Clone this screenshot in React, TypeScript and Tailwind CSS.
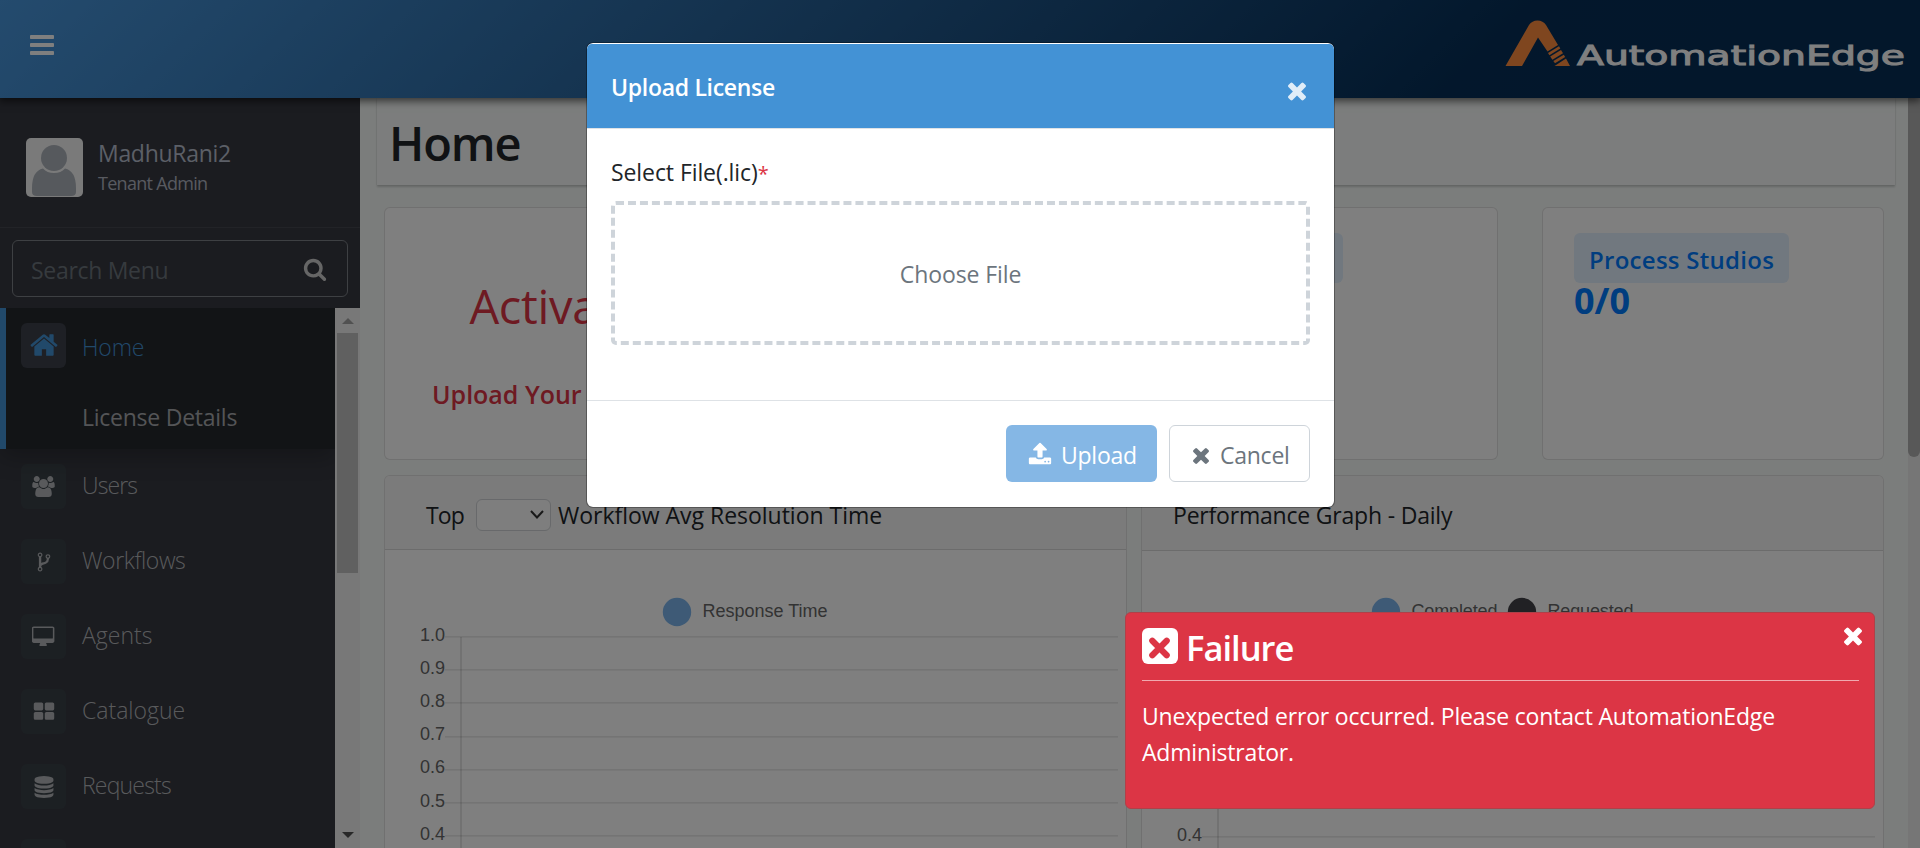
import type { ReactNode } from "react";

const ICONS = {
  bars: "M1664 1344v128q0 26-19 45t-45 19h-1408q-26 0-45-19t-19-45v-128q0-26 19-45t45-19h1408q26 0 45 19t19 45zm0-512v128q0 26-19 45t-45 19h-1408q-26 0-45-19t-19-45v-128q0-26 19-45t45-19h1408q26 0 45 19t19 45zm0-512v128q0 26-19 45t-45 19h-1408q-26 0-45-19t-19-45v-128q0-26 19-45t45-19h1408q26 0 45 19t19 45z",
  times: "M1490 1322q0 40-28 68l-136 136q-28 28-68 28t-68-28l-294-294-294 294q-28 28-68 28t-68-28l-136-136q-28-28-28-68t28-68l294-294-294-294q-28-28-28-68t28-68l136-136q28-28 68-28t68 28l294 294 294-294q28-28 68-28t68 28l136 136q28 28 28 68t-28 68l-294 294 294 294q28 28 28 68z",
  home: "M1472 992v480q0 26-19 45t-45 19h-384v-384h-256v384h-384q-26 0-45-19t-19-45v-480q0-1 .5-3t.5-3l575-474 575 474q1 2 1 6zm223-69l-62 74q-8 9-21 11h-3q-13 0-21-7l-692-577-692 577q-12 8-24 7-13-2-21-11l-62-74q-8-10-7-23.5t11-21.5l719-599q32-26 76-26t76 26l244 204v-195q0-14 9-23t23-9h192q14 0 23 9t9 23v408l219 182q10 8 11 21.5t-7 23.5z",
  search: "M1216 832q0-185-131.5-316.5t-316.5-131.5-316.5 131.5-131.5 316.5 131.5 316.5 316.5 131.5 316.5-131.5 131.5-316.5zm512 832q0 52-38 90t-90 38q-54 0-90-38l-343-342q-179 124-399 124-143 0-273.5-55.5t-225-150-150-225-55.5-273.5 55.5-273.5 150-225 225-150 273.5-55.5 273.5 55.5 225 150 150 225 55.5 273.5q0 220-124 399l343 343q37 37 37 90z",
  fork: "M672 1472q0-40-28-68t-68-28-68 28-28 68 28 68 68 28 68-28 28-68zm0-1152q0-40-28-68t-68-28-68 28-28 68 28 68 68 28 68-28 28-68zm640 128q0-40-28-68t-68-28-68 28-28 68 28 68 68 28 68-28 28-68zm96 0q0 52-26 96.5t-70 69.5q-2 287-226 414-67 38-203 81-128 40-169.5 71t-41.5 100v26q44 25 70 69.5t26 96.5q0 80-56 136t-136 56-136-56-56-136q0-52 26-96.5t70-69.5v-820q-44-25-70-69.5t-26-96.5q0-80 56-136t136-56 136 56 56 136q0 52-26 96.5t-70 69.5v497q54-26 154-57 55-17 87.5-29.5t70.5-31 59-39.5 40.5-51 28-69.5 8.5-91.5q-44-25-70-69.5t-26-96.5q0-80 56-136t136-56 136 56 56 136z",
  upload: "M1344 1472q0-26-19-45t-45-19-45 19-19 45 19 45 45 19 45-19 19-45zm256 0q0-26-19-45t-45-19-45 19-19 45 19 45 45 19 45-19 19-45zm128-224v320q0 40-28 68t-68 28h-1472q-40 0-68-28t-28-68v-320q0-40 28-68t68-28h427q21 56 70.5 92t110.5 36h256q61 0 110.5-36t70.5-92h427q40 0 68 28t28 68zm-325-648q-17 40-59 40h-256v448q0 26-19 45t-45 19h-256q-26 0-45-19t-19-45v-448h-256q-42 0-59-40-17-39 14-69l448-448q18-19 45-19t45 19l448 448q31 30 14 69z",
  grid: "M832 1024v384q0 52-38 90t-90 38h-512q-52 0-90-38t-38-90v-384q0-52 38-90t90-38h512q52 0 90 38t38 90zm0-768v384q0 52-38 90t-90 38h-512q-52 0-90-38t-38-90v-384q0-52 38-90t90-38h512q52 0 90 38t38 90zm896 768v384q0 52-38 90t-90 38h-512q-52 0-90-38t-38-90v-384q0-52 38-90t90-38h512q52 0 90 38t38 90zm0-768v384q0 52-38 90t-90 38h-512q-52 0-90-38t-38-90v-384q0-52 38-90t90-38h512q52 0 90 38t38 90z",
  database: "M896 768q237 0 443-43t325-127v170q0 69-103 128t-280 93.5-385 34.5-385-34.5-280-93.5-103-128v-170q119 84 325 127t443 43zm0 768q237 0 443-43t325-127v170q0 69-103 128t-280 93.5-385 34.5-385-34.5-280-93.5-103-128v-170q119 84 325 127t443 43zm0-384q237 0 443-43t325-127v170q0 69-103 128t-280 93.5-385 34.5-385-34.5-280-93.5-103-128v-170q119 84 325 127t443 43zm0-1152q208 0 385 34.5t280 93.5 103 128v128q0 69-103 128t-280 93.5-385 34.5-385-34.5-280-93.5-103-128v-128q0-69 103-128t280-93.5 385-34.5z",
  users: "M593 896q-162 5-265 128h-134q-82 0-138-40.5t-56-118.5q0-353 124-353 6 0 43.5 21t97.5 42.5 119 21.5q67 0 133-23-5 37-5 66 0 139 81 256zm1071 637q0 120-73 189.5t-194 69.5h-874q-121 0-194-69.5t-73-189.5q0-53 3.5-103.5t14-109 26.5-108.5 43-97.5 62-81 85.5-53.5 111.5-20q10 0 43 21.5t73 48 107 48 135 21.5 135-21.5 107-48 73-48 43-21.5q61 0 111.5 20t85.5 53.5 62 81 43 97.5 26.5 108.5 14 109 3.5 103.5zm-1024-1277q0 106-75 181t-181 75-181-75-75-181 75-181 181-75 181 75 75 181zm704 384q0 159-112.5 271.5t-271.5 112.5-271.5-112.5-112.5-271.5 112.5-271.5 271.5-112.5 271.5 112.5 112.5 271.5zm576 225q0 78-56 118.5t-138 40.5h-134q-103-123-265-128 81-117 81-256 0-29-5-66 66 23 133 23 59 0 119-21.5t97.5-42.5 43.5-21q124 0 124 353zm-128-609q0 106-75 181t-181 75-181-75-75-181 75-181 181-75 181 75 75 181z",
  desktop: "M1728 992v-832q0-13-9.5-22.5t-22.5-9.5h-1600q-13 0-22.5 9.5t-9.5 22.5v832q0 13 9.5 22.5t22.5 9.5h1600q13 0 22.5-9.5t9.5-22.5zm128-832v1088q0 66-47 113t-113 47h-544q0 37 16 77.5t32 71 16 43.5q0 26-19 45t-45 19h-512q-26 0-45-19t-19-45q0-14 16-44t32-70 16-78h-544q-66 0-113-47t-47-113v-1088q0-66 47-113t113-47h1600q66 0 113 47t47 113z",
};

function Icon({ name, className, box = "0 0 1792 1792" }: { name: keyof typeof ICONS; className: string; box?: string }) {
  return (
    <svg viewBox={box} className={`shrink-0 fill-current ${className}`}>
      <path d={ICONS[name]} />
    </svg>
  );
}

function Logo() {
  return (
    <svg viewBox="0 0 410 64" className="h-16 w-[410px]">
      <g fill="#fe8c3e">
        <path d="M0.500 52 L24 11 Q27 6.500 32.500 6.500 Q38 6.500 41 11 L53 31 L42.500 37.500 L33 23.500 L17 52 Z" />
        <path d="M43 39 L54 32.300 L55.300 34.500 L44.400 41.200 Z" />
        <path d="M45.200 42.400 L56 35.900 L58 39.200 L47.400 45.800 Z" />
        <path d="M48.300 47.100 L58.800 40.700 L60.200 43 L50 49.300 Z" />
        <path d="M49.500 52 L61 44.500 L65 52 Z" />
      </g>
      <text x="72" y="51" textLength="328" lengthAdjust="spacingAndGlyphs" fill="#ffffff" stroke="#ffffff" strokeWidth="1" fontFamily="DejaVu Sans, sans-serif" fontSize="27">
        AutomationEdge
      </text>
    </svg>
  );
}

function MenuItem({ icon, label, box, size, tracking = "" }: { icon: keyof typeof ICONS; label: string; box?: string; size: string; tracking?: string }) {
  return (
    <div className="flex h-[75px] shrink-0 items-center pl-[21px] text-[#b2b4b8]">
      <div className="flex size-[45px] items-center justify-center rounded-md bg-[#394147]">
        <Icon name={icon} className={size} box={box} />
      </div>
      <span className={`pb-[3px] pl-4 text-[23px] leading-9 font-light ${tracking}`}>{label}</span>
    </div>
  );
}

function Sidebar() {
  return (
    <aside className="flex w-[360px] shrink-0 flex-col bg-[#363840]">
      <div className="flex h-[130px] shrink-0 items-start border-b border-[#44474e] pt-10 pl-[26px]">
        <svg viewBox="0 0 57 59" className="h-[59px] w-[57px]">
          <rect width="57" height="59" rx="5" fill="#f4f5f5" />
          <circle cx="28" cy="20" r="13" fill="#adb2ba" />
          <path d="M6 58V50Q6 33 17 30.500Q21 35 28 35Q35 35 39 30.500Q50 33 50 50V54Q50 58 45 58H11Q6 58 6 54Z" fill="#adb2ba" />
        </svg>
        <div className="pl-[15px] text-[#b8bfce]">
          <div className="text-[23px] leading-[30px] tracking-[-0.3px]">MadhuRani2</div>
          <div className="pt-[3px] text-[18px] leading-6 tracking-[-0.700px] text-[#b0b5c0]">Tenant Admin</div>
        </div>
      </div>
      <div className="shrink-0 px-3 pt-3 pb-[11px]">
        <div className="flex h-[57px] items-center justify-between rounded-md border border-[#7c8086] pr-5 pl-[18px]">
          <span className="pt-1 text-[23px] tracking-[-0.300px] text-[#6c757d]">Search Menu</span>
          <Icon name="search" className="size-6 text-[#cccccc]" box="0 0 1792 1792" />
        </div>
      </div>
      <div className="flex min-h-0 flex-1">
        <nav className="flex min-w-0 flex-1 flex-col overflow-hidden">
          <div className="z-10 flex h-[141px] shrink-0 flex-col border-l-[6px] border-[#4392d5] bg-[#24282c] pt-[15px] pl-[15px] shadow-[0_8px_22px_rgba(0,0,0,0.24)]">
            <div className="flex h-[45px] items-center">
              <div className="flex size-[45px] items-center justify-center rounded-md bg-[#3c404a] text-[#4392d5]">
                <Icon name="home" className="-mt-0.5 size-[30px]" />
              </div>
              <span className="pt-0.5 pl-4 text-[23px] leading-9 font-light tracking-[-0.200px] text-[#4392d5]">Home</span>
            </div>
            <div className="pt-[31px] pl-[61px] text-[23px] leading-9 tracking-[-0.250px] text-[#a8aaae]">License Details</div>
          </div>
          <MenuItem icon="users" label="Users" size="h-[21px] w-[23px]" box="0 0 1920 1792" tracking="tracking-[-0.900px]" />
          <MenuItem icon="fork" label="Workflows" size="size-[22px]" tracking="tracking-[-0.400px]" />
          <MenuItem icon="desktop" label="Agents" size="h-[21px] w-[23px]" box="-32 -32 1920 1792" />
          <MenuItem icon="grid" label="Catalogue" size="size-[22px]" box="0 0 1792 1792" />
          <MenuItem icon="database" label="Requests" size="size-[22px]" tracking="tracking-[-0.800px]" />
          <MenuItem icon="users" label="" size="h-[21px] w-[23px]" box="0 0 1920 1792" />
        </nav>
        <div className="z-20 flex w-[25px] shrink-0 flex-col items-center justify-between bg-[#f1f1f1] pt-2.5 pb-2.5">
          <div className="flex flex-col items-center gap-[9px]">
            <svg viewBox="0 0 12 6" className="h-1.5 w-3"><path d="M6 0L12 6H0Z" fill="#a3a3a3" /></svg>
            <div className="h-60 w-[21px] bg-[#c1c1c1]" />
          </div>
          <svg viewBox="0 0 12 6" className="h-1.5 w-3"><path d="M0 0H12L6 6Z" fill="#505050" /></svg>
        </div>
      </div>
    </aside>
  );
}

function Card({ children, className = "" }: { children?: ReactNode; className?: string }) {
  return <div className={`h-[253px] w-[342px] rounded-md border border-black/12 bg-white ${className}`}>{children}</div>;
}

function StatCard({ title, value }: { title: string; value: string }) {
  return (
    <Card className="flex flex-col items-start pt-[25px] pl-[31px] text-[#007bff]">
      <div className="h-[50px] min-w-[148px] rounded-md bg-[#e2f0ff] px-[15px] pt-[9px] text-[24px] leading-9 font-semibold tracking-[0.280px]">{title}</div>
      <div className="-mt-px text-[36px] leading-[38px] font-bold">{value}</div>
    </Card>
  );
}

const TICKS = ["1.0", "0.9", "0.8", "0.7", "0.6", "0.5", "0.4"];

function ChartSvg({ legend, dy = 0 }: { legend: { x: number; label: string; color: string; w: number }[]; dy?: number }) {
  return (
    <svg viewBox="0 0 741 300" className="h-[300px] w-[741px] font-['Liberation_Sans']" fontSize="18">
      {legend.map((l) => (
        <g key={l.label}>
          <circle cx={l.x} cy={62 - dy} r="14.2" fill={l.color} />
          <text x={l.x + 25.5} y={67 - dy} fill="#666666" textLength={l.w}>{l.label}</text>
        </g>
      ))}
      {TICKS.map((t, i) => (
        <g key={t}>
          <text x="35" y={90.5 + i * 33.2} fill="#666666">{t}</text>
          <path d={`M60 ${86 + Math.round(i * 33.2)}.8H733`} stroke="#000000" strokeOpacity="0.12" strokeWidth="1.3" />
        </g>
      ))}
      <path d="M76 87V300" stroke="#000000" strokeOpacity="0.16" strokeWidth="1.3" />
    </svg>
  );
}

function Main() {
  return (
    <main className="flex min-w-0 flex-1 flex-col overflow-hidden bg-[#f7fbf9]">
      <div className="mr-[13px] ml-[17px] flex h-[87px] shrink-0 items-center bg-[#f8fbfa] pl-3 shadow-[0_2px_2px_rgba(0,0,0,0.18),0_0_1px_rgba(0,0,0,0.15)]">
        <h1 className="pt-1 text-[47px] font-semibold tracking-[-1.100px] text-[#212529]">Home</h1>
      </div>
      <div className="mt-[22px] mr-6 ml-6 flex shrink-0 justify-between">
        <Card className="flex flex-col items-center text-[#dc3545]">
          <div className="pt-[65px] text-[47px] leading-[66px] tracking-[-0.300px]">Activate</div>
          <div className="pt-[37px] text-[25px] leading-9 font-semibold">Upload Your License</div>
        </Card>
        <Card />
        <StatCard title="Workflows" value="0/0" />
        <StatCard title="Process Studios" value="0/0" />
      </div>
      <div className="mt-[15px] mr-6 ml-6 flex shrink-0 justify-between">
        <section className="w-[743px] overflow-hidden rounded-t-md border border-black/12 bg-white">
          <div className="flex h-[74px] items-center border-b border-black/12 bg-[#f7f7f7] pt-1 pl-[41px] text-[23px] text-[#212529]">
            <span className="w-[50px] leading-9 tracking-[-0.900px]">Top</span>
            <div className="flex h-8 w-[75px] items-center justify-end rounded-md border border-[#d0d3d6] bg-[#fcfcfc] pr-1.5">
              <svg viewBox="0 0 14 9" className="h-[9px] w-3.5"><path d="M1 1L7 7.500L13 1" fill="none" stroke="#333333" strokeWidth="2" /></svg>
            </div>
            <span className="pl-[7px] leading-9 tracking-[-0.020px]">Workflow Avg Resolution Time</span>
          </div>
          <ChartSvg legend={[{ x: 292, label: "Response Time", color: "#7cb5ec", w: 125 }]} />
        </section>
        <section className="w-[743px] overflow-hidden rounded-t-md border border-black/12 bg-white">
          <div className="flex h-[75px] items-center border-b border-black/12 bg-[#f7f7f7] pt-[3px] pl-[31px] text-[23px] leading-9 tracking-[-0.200px] text-[#212529]">
            <span>Performance Graph - Daily</span>
          </div>
          <ChartSvg
            dy={1}
            legend={[
              { x: 244, label: "Completed", color: "#7cb5ec", w: 86 },
              { x: 380, label: "Requested", color: "#434348", w: 86 },
            ]}
          />
        </section>
      </div>
    </main>
  );
}

function UploadModal() {
  return (
    <div className="absolute top-[42px] left-[586px] flex h-[466px] w-[749px] flex-col overflow-hidden rounded-[7px] border border-black/30 bg-white bg-clip-padding pt-px">
      <div className="flex h-[85px] shrink-0 items-center justify-between rounded-t-[5px] border-b border-[#dee2e6] bg-[#4392d5] pr-7 pl-6 text-white">
        <h2 className="pt-[3px] text-[23px] font-semibold tracking-[-0.300px]">Upload License</h2>
        <Icon name="times" className="mt-[11px] h-[19px] w-[18px] text-[#e0edf8]" box="302 366 1188 1188" />
      </div>
      <div className="flex h-[271px] shrink-0 flex-col px-6 pt-[25px]">
        <label className="h-9 text-[23px] leading-9 tracking-[-0.080px] text-[#212529]">
          Select File(.lic)<span className="text-[20px] leading-none text-[#dc3545]">*</span>
        </label>
        <div className="mt-[11px] flex h-36 shrink-0 items-center justify-center rounded-[5px] border-4 border-dashed border-[#ced4da] pt-0.5 text-[23px] tracking-[-0.100px] text-[#6c757d]">
          Choose File
        </div>
      </div>
      <div className="flex h-[107px] shrink-0 justify-end gap-3 border-t border-[#dee2e6] pt-6 pr-6">
        <button className="flex h-[57px] w-[151px] items-center rounded-md bg-[#85b7e5] pl-[22px] text-[23px] tracking-[-0.250px] text-white">
          <Icon name="upload" className="size-6" box="0 0 1792 1792" />
          <span className="pt-[3px] pl-[9px]">Upload</span>
        </button>
        <button className="flex h-[57px] w-[141px] items-center rounded-md border border-[#ced4da] bg-white pl-[23px] text-[23px] tracking-[-0.250px] text-[#6c757d]">
          <Icon name="times" className="mt-1 size-4" box="302 366 1188 1188" />
          <span className="pt-[3px] pl-[11px]">Cancel</span>
        </button>
      </div>
    </div>
  );
}

function FailureToast() {
  return (
    <div className="absolute top-[612px] left-[1125px] flex h-[197px] w-[750px] flex-col rounded-md border border-[#b04048] bg-[#dc3545] pr-[15px] pl-4 text-white">
      <div className="flex h-[68px] shrink-0 items-start justify-between border-b border-[#f0a9b0] pt-[15px]">
        <div className="flex">
          <svg viewBox="0 0 36 36" className="size-9">
            <rect width="36" height="36" rx="6" fill="#ffffff" />
            <path d="M10.300 12.800L24.700 27.200M24.700 12.800L10.300 27.200" stroke="#dc3545" strokeWidth="6.200" strokeLinecap="round" />
          </svg>
          <span className="-mt-px pl-2 text-[34.500px] leading-[42px] font-semibold tracking-[-1px]">Failure</span>
        </div>
        <Icon name="times" className="-mt-px -mr-[3px] h-[19px] w-[18px]" box="302 366 1188 1188" />
      </div>
      <p className="pt-[17px] text-[23px] leading-9 tracking-[-0.180px]">Unexpected error occurred. Please contact AutomationEdge Administrator.</p>
    </div>
  );
}

export default function App() {
  return (
    <div className="relative flex h-[848px] w-[1920px] flex-col overflow-hidden font-['Open_Sans',sans-serif]">
      <header className="z-20 flex h-[98px] shrink-0 items-center justify-between bg-[linear-gradient(135deg,#4896dc_0%,#062f58_76%,#062e56_100%)] pr-[5px] pl-[28px] shadow-[0_2px_8px_1px_rgba(0,0,0,0.6)]">
        <Icon name="bars" className="-mt-[8px] size-7 text-white" />
        <div className="-mt-[6px]"><Logo /></div>
      </header>
      <div className="flex min-h-0 flex-1">
        <Sidebar />
        <Main />
        <div className="w-3 shrink-0 bg-[#ededed]">
          <div className="h-[359px] rounded-b-full bg-[#b0b0b0]" />
        </div>
      </div>
      <div className="absolute inset-0 z-30 bg-black/50" />
      <div className="absolute inset-0 z-40">
        <UploadModal />
        <FailureToast />
      </div>
    </div>
  );
}
